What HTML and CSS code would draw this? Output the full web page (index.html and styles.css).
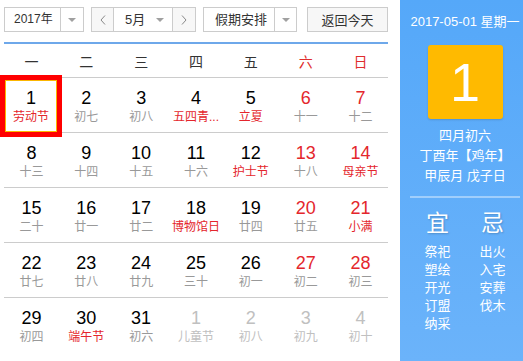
FILE: index.html
```html
<!DOCTYPE html>
<html lang="zh">
<head>
  <meta charset="UTF-8">
  <meta name="viewport" content="width=device-width, initial-scale=1.0">
  <title>万年历</title>
  <link rel="stylesheet" href="styles.css">
</head>
<body>
  <div class="calendar">
    <div class="main">
      <div class="toolbar">
        <div class="select year">
          <span class="val">2017年</span>
          <span class="drop"><i class="tri"></i></span>
        </div>
        <div class="select month">
          <span class="nav prev">
            <svg width="6" height="10" viewBox="0 0 6 10"><polyline points="5,0.5 1,5 5,9.5" fill="none" stroke="#888" stroke-width="1"/></svg>
          </span>
          <span class="mval">5月<i class="tri"></i></span>
          <span class="nav next">
            <svg width="6" height="10" viewBox="0 0 6 10"><polyline points="1,0.5 5,5 1,9.5" fill="none" stroke="#888" stroke-width="1"/></svg>
          </span>
        </div>
        <div class="select holiday">
          <span class="val">假期安排</span>
          <span class="drop"><i class="tri"></i></span>
        </div>
        <button class="today">返回今天</button>
      </div>
      <div class="rule"></div>

      <div class="week">
        <span>一</span><span>二</span><span>三</span><span>四</span><span>五</span>
        <span class="weekend">六</span><span class="weekend">日</span>
      </div>
      <div id="days"></div>
    </div>

    <aside class="side">
      <div class="date">2017-05-01 星期一</div>
      <div class="big">1</div>
      <div class="lunar-info">
        <div>四月初六</div>
        <div>丁酉年【鸡年】</div>
        <div>甲辰月 戊子日</div>
      </div>
      <div class="sep"></div>
      <div class="yiji">
        <div>
          <h3>宜</h3>
          <ul><li>祭祀</li><li>塑绘</li><li>开光</li><li>订盟</li><li>纳采</li></ul>
        </div>
        <div>
          <h3>忌</h3>
          <ul><li>出火</li><li>入宅</li><li>安葬</li><li>伐木</li></ul>
        </div>
      </div>
    </aside>
  </div>

  <script>
    // [dia, lunar, festivo, otro mes]
    const days = [
      [1,'劳动节',1],[2,'初七'],[3,'初八'],[4,'五四青...',1],[5,'立夏',1],[6,'十一'],[7,'十二'],
      [8,'十三'],[9,'十四'],[10,'十五'],[11,'十六'],[12,'护士节',1],[13,'十八'],[14,'母亲节',1],
      [15,'二十'],[16,'廿一'],[17,'廿二'],[18,'博物馆日',1],[19,'廿四'],[20,'廿五'],[21,'小满',1],
      [22,'廿七'],[23,'廿八'],[24,'廿九'],[25,'三十'],[26,'初一'],[27,'初二'],[28,'初三'],
      [29,'初四'],[30,'端午节',1],[31,'初六'],[1,'儿童节',0,1],[2,'初八',0,1],[3,'初九',0,1],[4,'初十',0,1]
    ];

    const grid = document.getElementById('days');
    for (let r = 0; r < days.length; r += 7) {
      const row = document.createElement('div');
      row.className = 'row';
      days.slice(r, r + 7).forEach(([n, lunar, fest, other], i) => {
        const cell = document.createElement('div');
        cell.className = 'day';
        if (i > 4 && !other) cell.classList.add('weekend');
        if (other) cell.classList.add('other');
        if (r === 0 && i === 0) cell.classList.add('selected');
        cell.innerHTML = `<div class="num">${n}</div><div class="lunar${fest ? ' fest' : ''}">${lunar}</div>`;
        row.appendChild(cell);
      });
      grid.appendChild(row);
    }
  </script>
</body>
</html>
```

FILE: styles.css
```css
* {
  box-sizing: border-box;
}

body {
  margin: 0;
  font-family: "Liberation Sans", Arial, "Noto Sans CJK SC", sans-serif;
  font-size: 13px;
  color: #333;
  background: #fff;
}

.calendar {
  display: flex;
  width: 523px;
  height: 361px;
}

.main {
  width: 400px;
}

/* barra superior */
.toolbar {
  display: flex;
  padding: 7px 0 0 4px;
}

.select {
  display: flex;
  height: 25px;
  border: 1px solid #ccc;
  background: #fff;
  line-height: 23px;
}

.select .val {
  padding-left: 9px;
}

.drop {
  flex: 1;
  border-left: 1px solid #ccc;
  display: flex;
  align-items: center;
  justify-content: center;
}

.tri {
  width: 0;
  height: 0;
  border-left: 4px solid transparent;
  border-right: 4px solid transparent;
  border-top: 4px solid #a0a0a0;
}

.year {
  width: 80px;
}

.year .val {
  width: 55px;
  font-size: 12px;
}

.month {
  width: 105px;
  margin-left: 7px;
}

.month .nav {
  width: 22px;
  background: #f7f7f7;
  display: flex;
  align-items: center;
  justify-content: center;
}

.month .prev {
  border-right: 1px solid #ccc;
}

.month .next {
  border-left: 1px solid #ccc;
  width: 23px;
}

.mval {
  flex: 1;
  display: flex;
  align-items: center;
  justify-content: space-between;
  padding: 0 8px 0 11px;
}

.holiday {
  width: 94px;
  margin-left: 7px;
}

.holiday .val {
  width: 70px;
  padding-left: 11px;
}

.today {
  width: 81px;
  height: 25px;
  margin-left: 10px;
  padding: 0;
  background: #f7f7f7;
  border: 1px solid #ccc;
  font: inherit;
  color: #333;
}

.rule {
  width: 384px;
  height: 2px;
  margin: 10px 0 0 4px;
  background: #6ea8ea;
}

/* tabla */
.week,
.row {
  display: grid;
  grid-template-columns: repeat(7, 1fr);
  width: 384px;
  margin-left: 4px;
  border-bottom: 1px solid #ccc;
}

.week {
  height: 34px;
  align-items: center;
  text-align: center;
  font-size: 14px;
}

.week .weekend {
  color: #e02d2d;
}

.row {
  height: 55px;
}

.row:last-child {
  border-bottom: none;
}

.day {
  padding-top: 9px;
  text-align: center;
  min-width: 0;
}

.num {
  font-size: 18px;
  line-height: 22px;
  color: #000;
}

.lunar {
  font-size: 12px;
  line-height: 16px;
  color: #999;
  white-space: nowrap;
}

.lunar.fest {
  color: #e4262c;
}

.day.weekend .num {
  color: #e4262c;
}

.day.other .num,
.day.other .lunar {
  color: #c0c0c0;
}

.day.selected {
  margin: 2px 2px 0 1px;
  padding-top: 6px;
  border: 1px solid #fbb600;
  outline: 5px solid #f00;
}

/* panel lateral */
.side {
  flex: 1;
  padding: 12px 3px 0 10px;
  background: linear-gradient(#55a8f9, #6bb3fa);
  color: #fff;
  text-align: center;
}

.date {
  line-height: 20px;
  white-space: nowrap;
}

.big {
  width: 75px;
  height: 74px;
  margin: 13px auto 0;
  background: #ffba00;
  border-radius: 3px;
  box-shadow: 0 1px 2px rgba(0,0,0,0.15);
  font-size: 54px;
  line-height: 74px;
}

.lunar-info {
  margin-top: 7px;
  line-height: 20px;
}

.sep {
  height: 2px;
  margin-top: 10px;
  background: rgba(255,255,255,0.4);
}

.yiji {
  display: grid;
  grid-template-columns: 1fr 1fr;
  margin-top: 10px;
}

.yiji h3 {
  margin: 0;
  font-size: 23px;
  font-weight: normal;
  line-height: 30px;
  text-shadow: 1px 1px 2px rgba(0,0,0,0.2);
}

.yiji ul {
  list-style: none;
  margin: 5px 0 0;
  padding: 0;
  line-height: 18px;
}
```
